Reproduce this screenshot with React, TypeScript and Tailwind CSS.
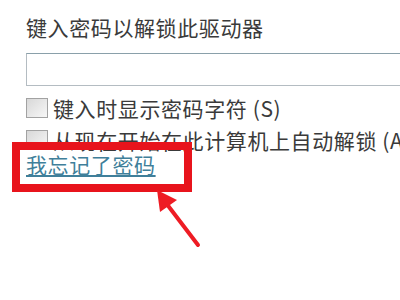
export default function App() {
  const font = { fontFamily: '"Noto Sans CJK SC", "Noto Sans", sans-serif' }
  return (
    <div className="relative w-[400px] h-[300px] bg-white overflow-hidden text-[#3a3a3a]" style={font}>
      <div className="flex flex-col pl-[26px] pt-[14px]">
        <p className="text-[21px] leading-[26px] tracking-[0.6px] whitespace-nowrap">键入密码以解锁此驱动器</p>

        <div className="mt-[13px] h-[33px] w-[400px] border border-[#b4bcc2] border-t-[#8aa0aa] bg-white" />

        <div className="mt-[9px] h-[26px] flex items-center gap-[5px] whitespace-nowrap">
          <span className="w-[22px] h-[20px] border border-[#a2a2a2] bg-gradient-to-br from-[#d8d8d8] to-[#f7f7f7] shrink-0" />
          <span className="text-[21px] leading-[26px] tracking-[0.6px]">键入时显示密码字符 (S)</span>
        </div>

        <div className="mt-[6px] h-[26px] flex items-center gap-[5px] whitespace-nowrap">
          <span className="w-[22px] h-[20px] border border-[#a2a2a2] bg-gradient-to-br from-[#d8d8d8] to-[#f7f7f7] shrink-0" />
          <span className="text-[21px] leading-[26px] tracking-[0.6px]">从现在开始在此计算机上自动解锁 (A)</span>
        </div>

        <a className="text-[21px] leading-[22px] tracking-[0.6px] text-[#3f7f9a] underline underline-offset-2 whitespace-nowrap relative z-10 w-fit">
          我忘记了密码
        </a>
      </div>

      {/* red highlight box */}
      <div className="absolute left-[12px] top-[142px] w-[180px] h-[50px] border-[8px] border-[#e8141c]" />

      {/* arrow */}
      <svg className="absolute left-0 top-0" width="400" height="300" viewBox="0 0 400 300">
        <line x1="198" y1="245" x2="166" y2="203" stroke="#ee1c24" strokeWidth="4" strokeLinecap="round" />
        <polygon points="157,190 160,212 177,200" fill="#ee1c24" />
      </svg>
    </div>
  )
}
